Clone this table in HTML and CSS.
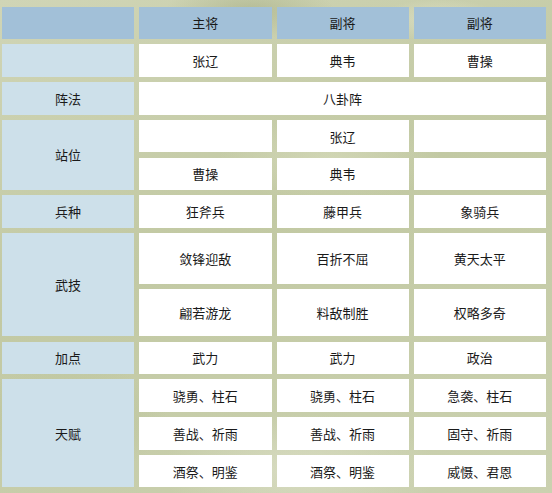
FILE: index.html
```html
<!DOCTYPE html>
<html lang="zh-CN">
<head>
<meta charset="utf-8">
<title>阵容</title>
<link rel="stylesheet" href="styles.css">
</head>
<body>
<div class="board">
  <div class="cell head"></div>
  <div class="cell head">主将</div>
  <div class="cell head">副将</div>
  <div class="cell head">副将</div>

  <div class="cell label"></div>
  <div class="cell">张辽</div>
  <div class="cell">典韦</div>
  <div class="cell">曹操</div>

  <div class="cell label">阵法</div>
  <div class="cell span3">八卦阵</div>

  <div class="cell label rows2">站位</div>
  <div class="cell"></div>
  <div class="cell">张辽</div>
  <div class="cell"></div>
  <div class="cell">曹操</div>
  <div class="cell">典韦</div>
  <div class="cell"></div>

  <div class="cell label">兵种</div>
  <div class="cell">狂斧兵</div>
  <div class="cell">藤甲兵</div>
  <div class="cell">象骑兵</div>

  <div class="cell label rows2">武技</div>
  <div class="cell">敛锋迎敌</div>
  <div class="cell">百折不屈</div>
  <div class="cell">黄天太平</div>
  <div class="cell">翩若游龙</div>
  <div class="cell">料敌制胜</div>
  <div class="cell">权略多奇</div>

  <div class="cell label">加点</div>
  <div class="cell">武力</div>
  <div class="cell">武力</div>
  <div class="cell">政治</div>

  <div class="cell label rows3">天赋</div>
  <div class="cell">骁勇、柱石</div>
  <div class="cell">骁勇、柱石</div>
  <div class="cell">急袭、柱石</div>
  <div class="cell">善战、祈雨</div>
  <div class="cell">善战、祈雨</div>
  <div class="cell">固守、祈雨</div>
  <div class="cell">酒祭、明鉴</div>
  <div class="cell">酒祭、明鉴</div>
  <div class="cell">威慑、君恩</div>
</div>
</body>
</html>
```

FILE: styles.css
```css
html, body {
  margin: 0;
  padding: 0;
}

body {
  width: 552px;
  height: 493px;
  overflow: hidden;
  font-family: "Noto Sans CJK SC", "Noto Sans", sans-serif;
  background-color: #c6cda9;
  background-image:
    radial-gradient(ellipse 120px 40px at 250px 10px, rgba(140, 150, 105, 0.35), transparent 70%),
    radial-gradient(ellipse 90px 30px at 440px 20px, rgba(235, 236, 215, 0.5), transparent 70%),
    radial-gradient(ellipse 160px 60px at 330px 160px, rgba(225, 228, 200, 0.45), transparent 70%),
    radial-gradient(ellipse 140px 80px at 70px 420px, rgba(170, 182, 135, 0.4), transparent 70%),
    radial-gradient(ellipse 200px 80px at 300px 470px, rgba(228, 230, 210, 0.55), transparent 70%),
    linear-gradient(160deg, #d0d5b6 0%, #c2c9a3 45%, #cbd1b0 100%);
}

.board {
  display: grid;
  grid-template-columns: repeat(4, 1fr);
  grid-template-rows: 32.5px 32.5px 32.5px 32.5px 32.5px 32.5px 51px 47px 32.5px 32.5px 32.5px 32.5px;
  gap: 5.25px 5px;
  width: 544px;
  margin: 6.5px 0 0 2px;
}

.cell {
  display: flex;
  align-items: center;
  justify-content: center;
  background: #ffffff;
  color: #1a1a1a;
  font-size: 13px;
  line-height: 1;
}

.head {
  background: #a2c0d8;
}

.label {
  background: #cde0ea;
}

.span3 {
  grid-column: span 3;
}

.rows2 {
  grid-row: span 2;
}

.rows3 {
  grid-row: span 3;
}
```
